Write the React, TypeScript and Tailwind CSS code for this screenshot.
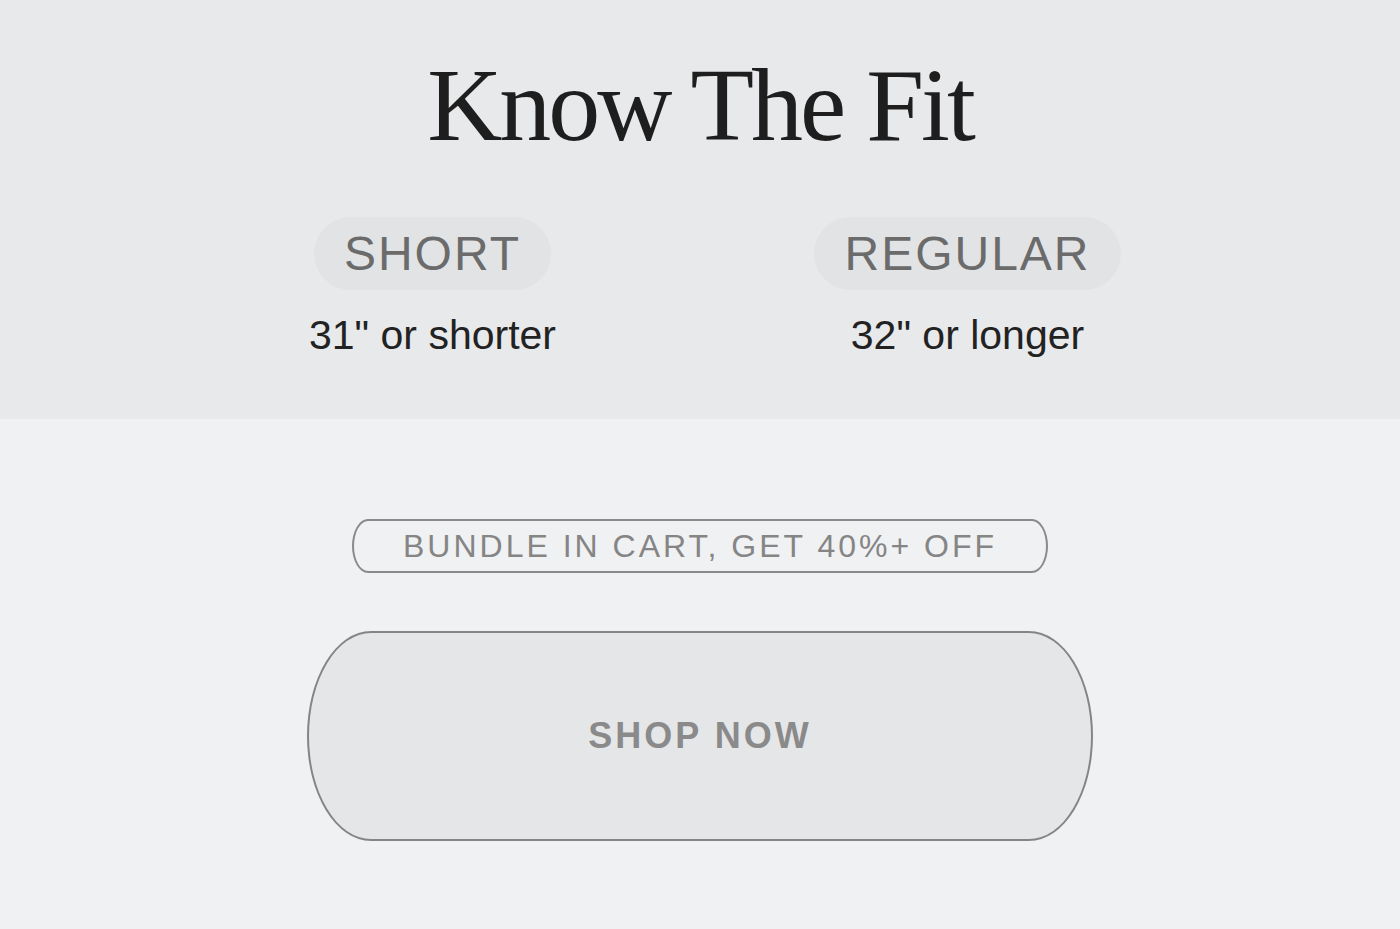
import React from "react";

const sans = { fontFamily: '"Liberation Sans", Arial, sans-serif' };
const serif = { fontFamily: '"Liberation Serif", "Times New Roman", serif' };

function FitOption({ label, detail }: { label: string; detail: string }) {
  return (
    <div className="flex flex-col items-center">
      <div
        className="flex h-[73px] items-center rounded-full bg-[#e2e3e5] px-[30px] text-[48px] leading-none tracking-[2px] text-[#6b6b6b]"
        style={sans}
      >
        {label}
      </div>
      <div className="mt-[25px] text-[41px] leading-none text-[#222222]" style={sans}>
        {detail}
      </div>
    </div>
  );
}

export default function App() {
  return (
    <div className="min-h-[929px] w-full bg-[#f0f1f3]">
      <section className="flex h-[419px] flex-col items-center bg-[#e8e9eb] pt-[53px]">
        <h1
          className="text-[104px] leading-none tracking-[-3px] text-[#1e1e1e]"
          style={serif}
        >
          Know The Fit
        </h1>
        <div className="mt-[60px] grid w-[1070px] grid-cols-2">
          <FitOption label="SHORT" detail={'31" or shorter'} />
          <FitOption label="REGULAR" detail={'32" or longer'} />
        </div>
      </section>

      <section className="flex flex-col items-center pt-[100px]">
        <div
          className="flex h-[54px] w-[696px] items-center justify-center rounded-[16px/27px] border-2 border-[#8a8a8a] text-[32px] leading-none tracking-[3px] text-[#858585]"
          style={sans}
        >
          BUNDLE IN CART, GET 40%+ OFF
        </div>
        <button
          className="mt-[58px] flex h-[210px] w-[786px] items-center justify-center rounded-[64px/105px] border-2 border-[#858585] bg-[#e5e6e8] text-[36px] font-bold leading-none tracking-[3px] text-[#8a8a8a]"
          style={sans}
        >
          SHOP NOW
        </button>
      </section>
    </div>
  );
}
